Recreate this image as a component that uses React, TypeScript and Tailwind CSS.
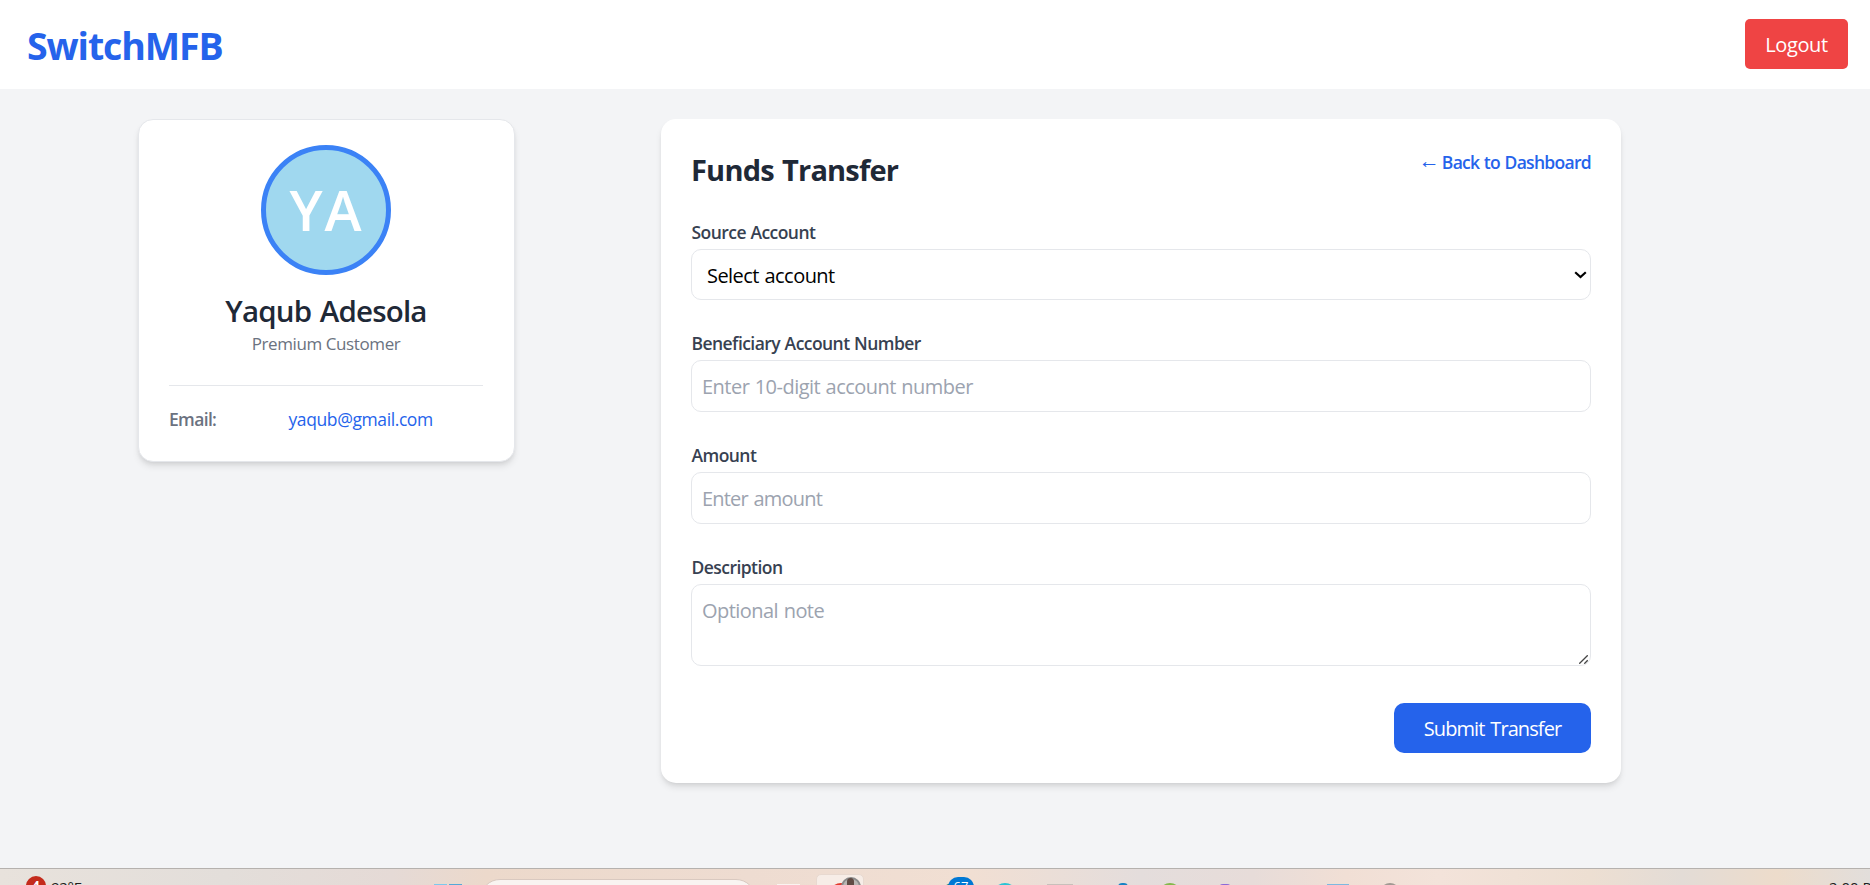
import type { ReactNode } from "react";

function Header() {
  return (
    <header className="flex h-[89px] items-start justify-between bg-white pl-[27px] pr-[22px] pt-[19px]">
      <h1 className="whitespace-nowrap pt-[2px] text-[37.5px] leading-[50px] font-bold tracking-[-1.1px] text-[#2563eb]">SwitchMFB</h1>
      <button className="h-[50px] w-[103px] rounded-[5px] bg-[#ef4444] pt-px text-[20px] leading-[50px] tracking-[-0.4px] text-white">Logout</button>
    </header>
  );
}

function ProfileCard() {
  return (
    <aside className="flex h-[343px] w-[377px] flex-col items-center rounded-[15px] border border-[#e5e7eb] bg-white pl-[30px] pr-[31px] pt-[25px] shadow-[0_5px_7.5px_-1px_rgba(0,0,0,0.1),0_2.5px_5px_-2.5px_rgba(0,0,0,0.1)]">
      <div className="flex size-[130px] items-center justify-center rounded-full border-[5px] border-[#3b82f6] bg-[#a0d8ef] pb-[2px] pl-[1px] text-[56px] leading-none font-semibold tracking-[2px] text-white">YA</div>
      <h2 className="mt-[16px] whitespace-nowrap text-[29.5px] leading-[40px] font-semibold tracking-[-0.8px] text-[#1f2937] [word-spacing:1.5px]">Yaqub Adesola</h2>
      <p className="whitespace-nowrap text-[17px] leading-[25px] tracking-[-0.4px] text-[#6b7280]">Premium Customer</p>
      <div className="mt-[29px] flex w-full border-t border-[#e5e7eb] pt-[21px] text-[17.5px] leading-[25px]">
        <span className="w-[119.5px] font-semibold tracking-[-0.65px] text-[#6b7280]">Email:</span>
        <span className="tracking-[-0.4px] text-[#2563eb]">yaqub@gmail.com</span>
      </div>
    </aside>
  );
}

function Field({ label, children }: { label: string; children: ReactNode }) {
  return (
    <label className="flex flex-col">
      <span className="mb-[4px] pl-[0.5px] pt-px text-[17.5px] leading-[25px] font-semibold tracking-[-0.55px] text-[#374151] [word-spacing:0.5px]">{label}</span>
      {children}
    </label>
  );
}

function TransferCard() {
  return (
    <section className="h-[664px] w-[960px] rounded-[15px] bg-white p-[30px] shadow-[0_5px_7.5px_-1px_rgba(0,0,0,0.1),0_2.5px_5px_-2.5px_rgba(0,0,0,0.1)]">
      <div className="flex h-[70px] items-start justify-between">
        <h2 className="whitespace-nowrap pt-px text-[29px] leading-[40px] font-bold tracking-[-0.8px] text-[#1f2937] [word-spacing:1.5px]">Funds Transfer</h2>
        <a className="flex whitespace-nowrap pt-px text-[17.5px] leading-[25px] font-semibold tracking-[-0.7px] text-[#2563eb] [word-spacing:0.6px]">
          <span className="-mt-[2px] w-[23px] text-[21px] font-normal">←</span>
          <span>Back to Dashboard</span>
        </a>
      </div>
      <form className="flex flex-col">
        <Field label="Source Account">
          <span className="relative block">
            <select className="block h-[51px] w-full appearance-none rounded-[10px] border border-[#e5e7eb] bg-white pl-[15px] pt-[2px] text-[20px] tracking-[-0.55px] text-black [word-spacing:1px]">
              <option>Select account</option>
            </select>
            <svg className="pointer-events-none absolute right-[4px] top-[22px]" width="13" height="9" viewBox="0 0 13 9" fill="none" stroke="#000" strokeWidth="2.2">
              <path d="M1.2 1.2 6.5 6 11.8 1.2" />
            </svg>
          </span>
        </Field>
        <div className="mt-[30px]">
          <Field label="Beneficiary Account Number">
            <input className="h-[52px] rounded-[10px] border border-[#e5e7eb] px-[10px] text-[20px] tracking-[-0.52px] [word-spacing:0.7px] placeholder:text-[#9ca3af]" placeholder="Enter 10-digit account number" />
          </Field>
        </div>
        <div className="mt-[30px]">
          <Field label="Amount">
            <input className="h-[52px] rounded-[10px] border border-[#e5e7eb] px-[10px] text-[20px] tracking-[-0.8px] [word-spacing:1.2px] placeholder:text-[#9ca3af]" placeholder="Enter amount" />
          </Field>
        </div>
        <div className="mt-[30px]">
          <Field label="Description">
            <span className="relative block">
              <textarea className="block h-[82px] w-full resize-none rounded-[10px] border border-[#e5e7eb] px-[10px] pt-[11px] text-[20px] leading-[30px] tracking-[-0.55px] [word-spacing:1px] placeholder:text-[#9ca3af]" placeholder="Optional note" />
              <svg className="absolute right-[3px] bottom-[2px]" width="9" height="9" viewBox="0 0 9 9" fill="none" stroke="#444" strokeWidth="1.3">
                <path d="M0.3 8.7 8.7 0.3M5.3 8.7 8.7 5.3" />
              </svg>
            </span>
          </Field>
        </div>
        <button type="button" className="mt-[37px] h-[50px] w-[197px] self-end rounded-[10px] bg-[#2563eb] pt-px text-[20px] leading-[50px] tracking-[-0.9px] text-white [word-spacing:1.5px]">Submit Transfer</button>
      </form>
    </section>
  );
}

function Taskbar() {
  return (
    <footer className="relative h-[17px] overflow-hidden border-t border-[#b5b1ae] bg-[linear-gradient(90deg,#e8e2dc_0%,#e3deda_12%,#e5dad6_21%,#ecd9cb_26%,#eedcd1_40%,#f1dfd3_52%,#e4dddc_61%,#e7dcd9_67%,#f1dfd5_72%,#f3e3da_77%,#eddfd2_85%,#e3dcd6_90%,#eddccb_95%,#e2dedb_100%)]">
      <span className="absolute left-[26px] top-[7px] flex size-5 justify-center rounded-full bg-[#c42b1c] pt-[2px] text-[13px] leading-[15px] font-bold text-white">4</span>
      <span className="absolute left-[51px] top-[8px] text-[15px] leading-[20px] tracking-[-0.3px] text-[#202020]">92°F</span>
      <span className="absolute left-[434px] top-[15px] h-4 w-[13px] bg-[#7cc9ed]" />
      <span className="absolute left-[449px] top-[15px] h-4 w-[13px] bg-[#54a9d8]" />
      <span className="absolute left-[480px] top-[10px] h-10 w-[276px] rounded-[20px] border border-[#d9c9c0] bg-[#f9f4f1]" />
      <span className="absolute left-[777px] top-[15px] h-4 w-[23px] bg-[#faf4f1]" />
      <span className="absolute left-[816px] top-[5px] h-12 w-[48px] rounded-[5px] border border-[#e8d9d0] bg-[#f7ede7]" />
      <span className="absolute left-[829px] top-[14px] size-[24px] rounded-full bg-[#e23b2e]" />
      <span className="absolute left-[841px] top-[8px] size-[20px] rounded-full border-2 border-[#8b8b8b] bg-[#b9b6b3]" />
      <span className="absolute left-[847px] top-[9px] h-3 w-[7px] rounded-full bg-[#604b44]" />
      <span className="absolute left-[941px] top-[14px] size-[24px] rounded-full bg-[#167c45]" />
      <span className="absolute left-[948px] top-[8px] flex h-[20px] w-[26px] justify-center rounded-full bg-[#0078d4] pt-[2px] text-[13px] leading-[15px] text-white">67</span>
      <span className="absolute left-[993px] top-[14px] size-[24px] rounded-full bg-[#28c4d5]" />
      <span className="absolute left-[1047px] top-[15px] h-4 w-[26px] bg-[#c8c0bb]" />
      <span className="absolute left-[1118px] top-[14px] h-4 w-[10px] rounded-t-[4px] bg-[#1683c4]" />
      <span className="absolute left-[1159px] top-[14px] size-[22px] rounded-full bg-[#84b84c]" />
      <span className="absolute left-[1219px] top-[15px] h-4 w-[12px] rounded-t-[4px] bg-[#8c6ad8]" />
      <span className="absolute left-[1327px] top-[15px] h-4 w-[22px] bg-[#7db9e0]" />
      <span className="absolute left-[1380px] top-[14px] size-[20px] rounded-full border-2 border-[#a19993]" />
      <span className="absolute left-[1829px] top-[8px] whitespace-nowrap text-[15px] leading-[20px] text-[#202020]">2:00 PM</span>
    </footer>
  );
}

export default function App() {
  return (
    <div className="flex h-[885px] w-[1870px] flex-col overflow-hidden bg-[#f3f4f6] font-['Open_Sans','Noto_Sans',sans-serif]">
      <Header />
      <main className="flex flex-1 items-start gap-[146px] pl-[138px] pt-[30px]">
        <ProfileCard />
        <TransferCard />
      </main>
      <Taskbar />
    </div>
  );
}
